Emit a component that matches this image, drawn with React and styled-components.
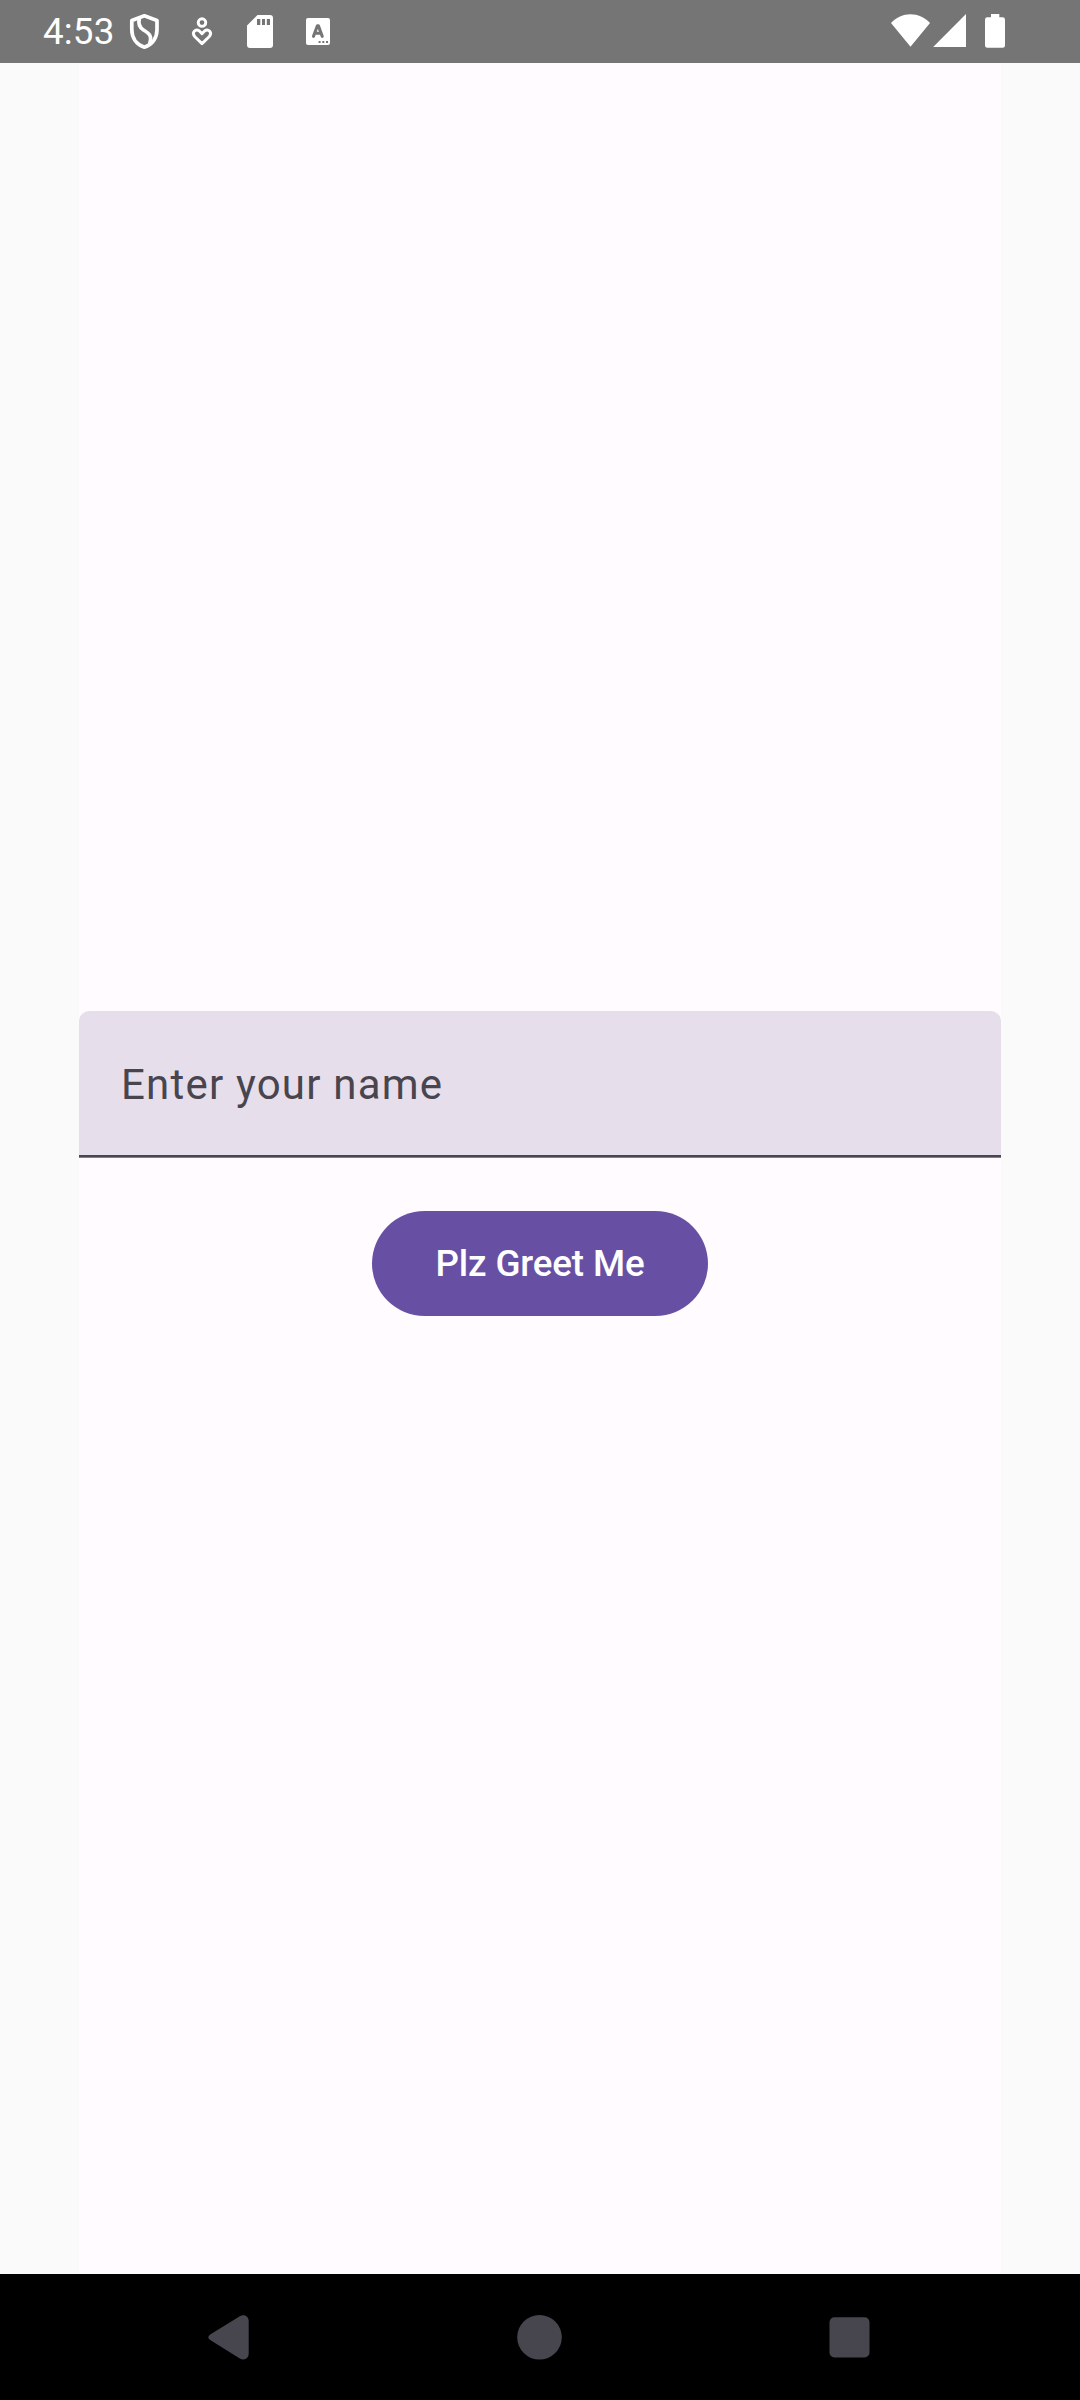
import React from "react";
import styled, { createGlobalStyle } from "styled-components";

const GlobalStyle = createGlobalStyle`
  *, *::before, *::after { box-sizing: border-box; }
  body { margin: 0; background: #fafafa; font-family: Roboto, sans-serif; }
`;

const Screen = styled.div`
  display: flex;
  flex-direction: column;
  width: 1080px;
  height: 2400px;
  background: #fafafa;
`;

const StatusBar = styled.header`
  display: flex;
  justify-content: space-between;
  height: 63px;
  padding: 0 75px 0 43px;
  background: #757575;
  color: #fff;
`;

const StatusGroup = styled.div`
  display: flex;
  align-items: center;
`;

const Clock = styled.span`
  width: 72px;
  font-size: 36.75px;
  line-height: 63px;
  letter-spacing: 0.15px;
  white-space: nowrap;
`;

const Glyph = styled.svg`
  display: block;
  flex: none;
  width: ${(p) => p.$width}px;
  height: ${(p) => p.$height}px;
  margin-left: ${(p) => p.$gap || 0}px;
`;

const Surface = styled.main`
  flex: 1;
  display: flex;
  flex-direction: column;
  align-items: center;
  width: 922px;
  margin-left: 79px;
  padding-top: 948px;
  background: #fffbff;
`;

const NameField = styled.input`
  display: block;
  width: 100%;
  height: 147px;
  margin: 0;
  padding: 0 42px;
  border: 0;
  border-radius: 10.5px 10.5px 0 0;
  outline: none;
  background: linear-gradient(#49454f, #49454f) bottom / 100% 2.625px no-repeat #e6dfeb;
  color: #1c1b1f;
  font-family: Roboto, sans-serif;
  font-size: 42px;
  letter-spacing: 1.2px;
  &::placeholder { color: #49454f; opacity: 1; }
`;

const GreetButton = styled.button`
  width: 336px;
  height: 105px;
  margin: 53px 0 0;
  padding: 0;
  border: 0;
  border-radius: 52.5px;
  background: #6750a4;
  color: #fff;
  font-family: Roboto, sans-serif;
  font-size: 36.75px;
  font-weight: 500;
  letter-spacing: -0.15px;
  white-space: nowrap;
`;

const NavBar = styled.nav`
  display: flex;
  align-items: center;
  justify-content: space-between;
  height: 126px;
  padding: 0 206px 0 204px;
  background: #000;
  color: #47464f;
`;

const ShieldIcon = () => (
  <Glyph $width={35} $height={63} $gap={12} viewBox="127 0 35 63">
    <g fill="none" stroke="currentColor" strokeWidth="3.7" strokeLinejoin="round">
      <path d="M144.4 15.8 L157 20.4 V29.5 C157 38 152.2 44.6 144.4 47.2 C136.6 44.6 131.8 38 131.8 29.5 V20.4 Z" />
      <path d="M139.4 18.2 C137.9 24 139.3 27.3 143.5 30 C149.8 33.8 152.2 36.2 149.6 44" />
    </g>
  </Glyph>
);

const HeartIcon = () => (
  <Glyph $width={24} $height={63} $gap={28} viewBox="190 0 24 63">
    <g fill="none" stroke="currentColor" strokeWidth="2.9" strokeLinejoin="round">
      <circle cx="202" cy="22.6" r="3.8" />
      <path d="M202 43.6 L194.9 36.7 C191.1 32.6 195.6 28.2 199.4 31 L202 33.6 L204.6 31 C208.4 28.2 212.9 32.6 209.1 36.7 Z" />
    </g>
  </Glyph>
);

const SdCardIcon = () => (
  <Glyph $width={26} $height={63} $gap={33} viewBox="247 0 26 63">
    <path
      fill="currentColor"
      fillRule="evenodd"
      d="M257.5 15 H270 Q273 15 273 18 V45 Q273 48 270 48 H250 Q247 48 247 45 V25.5 Z M257 19 V25 H260.3 V19 Z M262 19 V25 H265 V19 Z M266.8 19 V25 H270 V19 Z"
    />
  </Glyph>
);

const LetterTileIcon = () => (
  <Glyph $width={24} $height={63} $gap={33} viewBox="306 0 24 63">
    <rect x="306" y="18" width="24" height="27" rx="2" fill="currentColor" />
    <g fill="none" stroke="#757575" strokeWidth="3.1" strokeLinecap="round" strokeLinejoin="round">
      <path d="M313.5 36.3 L317.4 25.7 H318.4 L322.2 36.3 M315 33.2 H320.8" />
    </g>
    <path fill="#757575" d="M318.6 41h2v2h-2z M322.3 41h2v2h-2z M326 41h2v2h-2z" />
  </Glyph>
);

const WifiIcon = () => (
  <Glyph $width={39} $height={63} viewBox="891 0 39 63">
    <path fill="currentColor" d="M910.5 46.8 L891 23 C901.5 11.2 919.5 11.2 930 23 Z" />
  </Glyph>
);

const SignalIcon = () => (
  <Glyph $width={33} $height={63} $gap={3} viewBox="933 0 33 63">
    <path fill="currentColor" d="M933.2 46.9 L966 14 V46.9 Z" />
  </Glyph>
);

const BatteryIcon = () => (
  <Glyph $width={20} $height={63} $gap={19} viewBox="985 0 20 63">
    <path
      fill="currentColor"
      d="M991 14 H999.3 V17.3 H1002.6 Q1005 17.3 1005 19.7 V45.4 Q1005 47.8 1002.6 47.8 H987.4 Q985 47.8 985 45.4 V19.7 Q985 17.3 987.4 17.3 H991 Z"
    />
  </Glyph>
);

const BackIcon = () => (
  <Glyph $width={49} $height={126} viewBox="204 2274 49 126">
    <path
      fill="currentColor"
      d="M210.2 2334.5 L239.8 2316.2 C244 2313.6 248.7 2316 248.7 2321 V2353.6 C248.7 2358.6 244 2361 239.8 2358.4 L210.2 2340.1 Q206.4 2337.3 210.2 2334.5 Z"
    />
  </Glyph>
);

const HomeIcon = () => (
  <Glyph $width={49} $height={126} viewBox="515 2274 49 126">
    <circle cx="539.5" cy="2337.3" r="22.3" fill="currentColor" />
  </Glyph>
);

const RecentsIcon = () => (
  <Glyph $width={49} $height={126} viewBox="825 2274 49 126">
    <rect x="829.5" y="2317.3" width="40" height="40.2" rx="5" fill="currentColor" />
  </Glyph>
);

export default function App() {
  return (
    <>
      <GlobalStyle />
      <Screen>
        <StatusBar>
          <StatusGroup>
            <Clock>4:53</Clock>
            <ShieldIcon />
            <HeartIcon />
            <SdCardIcon />
            <LetterTileIcon />
          </StatusGroup>
          <StatusGroup>
            <WifiIcon />
            <SignalIcon />
            <BatteryIcon />
          </StatusGroup>
        </StatusBar>
        <Surface>
          <NameField type="text" placeholder="Enter your name" />
          <GreetButton type="button">Plz Greet Me</GreetButton>
        </Surface>
        <NavBar>
          <BackIcon />
          <HomeIcon />
          <RecentsIcon />
        </NavBar>
      </Screen>
    </>
  );
}
